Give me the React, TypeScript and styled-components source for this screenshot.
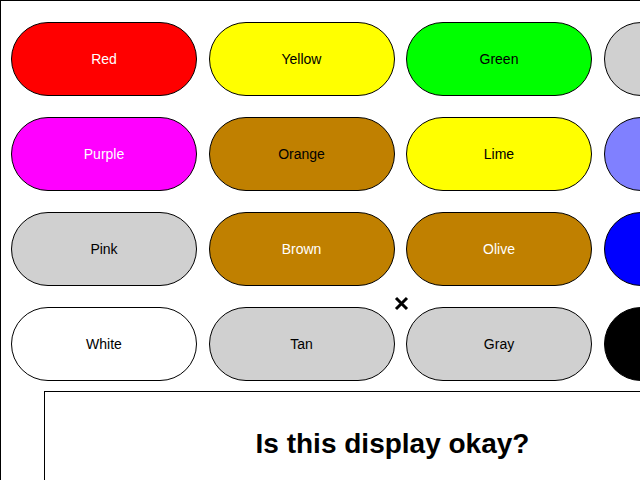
import React from "react";
import styled, { createGlobalStyle } from "styled-components";

const GlobalStyle = createGlobalStyle`
  html, body {
    margin: 0;
    padding: 0;
    width: 640px;
    height: 480px;
    overflow: hidden;
    background: #ffffff;
    font-family: "Liberation Sans", Arial, sans-serif;
  }
`;

const Screen = styled.div`
  position: relative;
  width: 640px;
  height: 480px;
  box-sizing: border-box;
  border-left: 1px solid #000;
  border-top: 1px solid #000;
  overflow: hidden;
  background: #fff;
`;

const ColorGrid = styled.div`
  display: grid;
  grid-template-columns: repeat(4, 186px);
  grid-auto-rows: 74px;
  column-gap: 11.5px;
  row-gap: 21px;
  padding: 21px 0 0 10px;
  width: max-content;
`;

const Pill = styled.button<{ $bg: string; $fg: string }>`
  box-sizing: border-box;
  width: 186px;
  height: 74px;
  border: 1px solid #000;
  border-radius: 37px;
  background: ${(p) => p.$bg};
  color: ${(p) => p.$fg};
  font-family: "Liberation Sans", Arial, sans-serif;
  font-size: 14px;
  padding: 0;
  display: flex;
  align-items: center;
  justify-content: center;
`;

const PromptBox = styled.div`
  box-sizing: border-box;
  margin: 10px 0 0 43px;
  width: 697px;
  height: 120px;
  border: 1px solid #000;
  background: #fff;
  padding-top: 36px;
  text-align: center;
  font-family: "Liberation Sans", Arial, sans-serif;
  font-weight: bold;
  font-size: 28px;
  line-height: 32px;
  color: #000;
`;

// the X pointer sitting over the grid
const Cursor = styled.svg`
  position: absolute;
  left: 393px;
  top: 295px;
`;

// last column runs off the right edge, its labels are never seen
const colors = [
  { label: "Red", bg: "#ff0000", fg: "#ffffff" },
  { label: "Yellow", bg: "#ffff00", fg: "#000000" },
  { label: "Green", bg: "#00ff00", fg: "#000000" },
  { label: "", bg: "#d0d0d0", fg: "#000000" },
  { label: "Purple", bg: "#ff00ff", fg: "#ffffff" },
  { label: "Orange", bg: "#c08000", fg: "#000000" },
  { label: "Lime", bg: "#ffff00", fg: "#000000" },
  { label: "", bg: "#8080ff", fg: "#000000" },
  { label: "Pink", bg: "#d0d0d0", fg: "#000000" },
  { label: "Brown", bg: "#c08000", fg: "#ffffff" },
  { label: "Olive", bg: "#c08000", fg: "#ffffff" },
  { label: "", bg: "#0000ff", fg: "#ffffff" },
  { label: "White", bg: "#ffffff", fg: "#000000" },
  { label: "Tan", bg: "#d0d0d0", fg: "#000000" },
  { label: "Gray", bg: "#d0d0d0", fg: "#000000" },
  { label: "", bg: "#000000", fg: "#ffffff" },
];

const App = () => {
  return (
    <>
      <GlobalStyle />
      <Screen>
        <ColorGrid>
          {colors.map((c, i) => (
            <Pill key={i} $bg={c.bg} $fg={c.fg}>
              {c.label}
            </Pill>
          ))}
        </ColorGrid>
        <PromptBox>Is this display okay?</PromptBox>
        <Cursor width="15" height="15" viewBox="0 0 15 15">
          <path d="M2 2 L13 13 M13 2 L2 13" stroke="#000" strokeWidth="3" />
        </Cursor>
      </Screen>
    </>
  );
};

export default App;
